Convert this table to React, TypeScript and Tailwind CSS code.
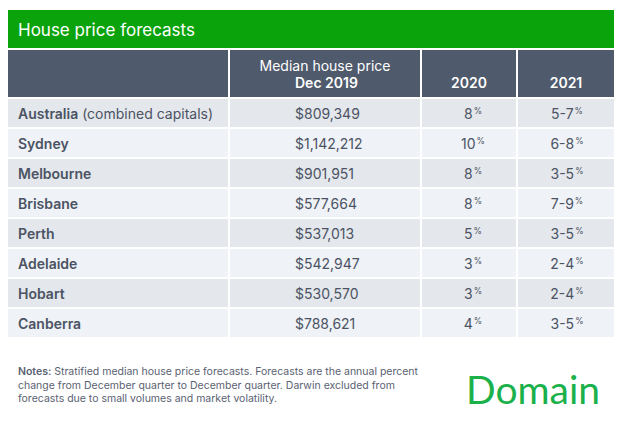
import React from "react";

const rows = [
  { name: "Australia", extra: " (combined capitals)", price: "$809,349", y20: "8", y21: "5-7" },
  { name: "Sydney", price: "$1,142,212", y20: "10", y21: "6-8" },
  { name: "Melbourne", price: "$901,951", y20: "8", y21: "3-5" },
  { name: "Brisbane", price: "$577,664", y20: "8", y21: "7-9" },
  { name: "Perth", price: "$537,013", y20: "5", y21: "3-5" },
  { name: "Adelaide", price: "$542,947", y20: "3", y21: "2-4" },
  { name: "Hobart", price: "$530,570", y20: "3", y21: "2-4" },
  { name: "Canberra", price: "$788,621", y20: "4", y21: "3-5" },
];

function Pct({ v }: { v: string }) {
  return (
    <span>
      {v}
      <span className="relative -top-[5px] text-[8.5px] ml-[1px]">%</span>
    </span>
  );
}

export default function App() {
  return (
    <div
      className="w-[633px] h-[437px] bg-white pt-[10px] pl-[8px] text-[#4b5364]"
      style={{ fontFamily: "Inter, 'Open Sans', sans-serif" }}
    >
      <div className="w-[606px] flex flex-col gap-[2px]">
        <div className="h-[38px] bg-[#0ba30c] flex items-center pl-[10px] pt-[3px] text-white text-[17px]">
          House price forecasts
        </div>
        <div className="grid grid-cols-[220px_190px_94px_96px] gap-x-[2px] gap-y-[2px]">
          <div className="h-[47px] bg-[#4f5a6c]" />
          <div className="h-[47px] bg-[#4f5a6c] text-white text-[14px] leading-[17px] flex flex-col justify-end pb-[6px]">
            <div className="text-center">Median house price</div>
            <div className="pl-[65px] font-semibold">Dec 2019</div>
          </div>
          <div className="h-[47px] bg-[#4f5a6c] text-white text-[14px] font-semibold flex items-end justify-center pb-[6px] leading-[17px]">
            2020
          </div>
          <div className="h-[47px] bg-[#4f5a6c] text-white text-[14px] font-semibold flex items-end justify-center pb-[6px] leading-[17px]">
            2021
          </div>
          {rows.map((r, i) => {
            const bg = i % 2 === 0 ? "bg-[#e4e7eb]" : "bg-[#eff2f6]";
            return (
              <React.Fragment key={r.name}>
                <div className={`h-[28px] ${bg} flex items-center pl-[10px] text-[14px]`}>
                  <span className="font-semibold">{r.name}</span>
                  {r.extra && <span className="whitespace-pre">{r.extra}</span>}
                </div>
                <div className={`h-[28px] ${bg} flex items-center pl-[65px] text-[14px]`}>{r.price}</div>
                <div className={`h-[28px] ${bg} flex items-center justify-center text-[14px] pl-[8px]`}>
                  <Pct v={r.y20} />
                </div>
                <div className={`h-[28px] ${bg} flex items-center justify-center text-[14px] pl-[2px]`}>
                  <Pct v={r.y21} />
                </div>
              </React.Fragment>
            );
          })}
        </div>
      </div>
      <div className="flex items-start mt-[28px]">
        <p className="w-[410px] pl-[10px] text-[10.5px] leading-[13.5px] text-[#5a6272] whitespace-nowrap">
          <span className="font-semibold">Notes:</span> Stratified median house price forecasts. Forecasts are the annual percent
          <br />
          change from December quarter to December quarter. Darwin excluded from
          <br />
          forecasts due to small volumes and market volatility.
        </p>
        <div
          className="ml-[48px] mt-[2px] text-[39px] leading-[44px] text-[#1bb14a]"
          style={{ fontFamily: "Lato, sans-serif" }}
        >
          Domain
        </div>
      </div>
    </div>
  );
}
